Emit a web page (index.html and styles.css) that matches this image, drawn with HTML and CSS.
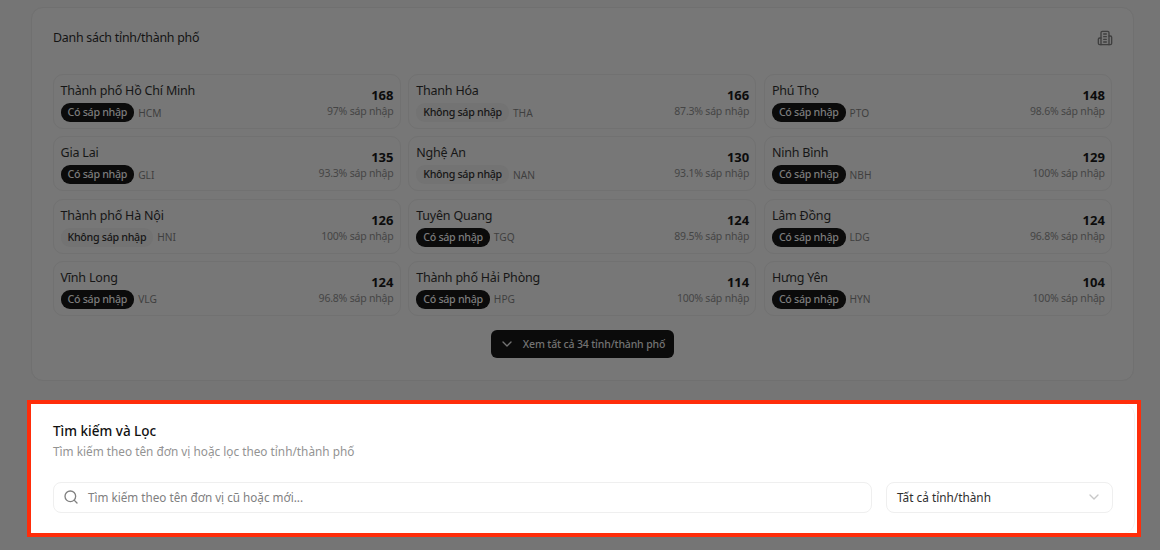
FILE: index.html
```html
<!DOCTYPE html>
<html lang="vi">
<head>
    <meta charset="UTF-8">
    <title>Danh sách tỉnh/thành phố</title>
    <link rel="stylesheet" href="styles.css">
</head>
<body>
<div class="page">
    <section class="card provinces">
        <div class="card-head">
            <h2>Danh sách tỉnh/thành phố</h2>
            <svg class="head-icon" width="16" height="16" viewBox="0 0 24 24" fill="none" stroke="currentColor" stroke-width="2" stroke-linecap="round" stroke-linejoin="round">
                <path d="M6 22V4a2 2 0 0 1 2-2h8a2 2 0 0 1 2 2v18Z"/>
                <path d="M6 12H4a2 2 0 0 0-2 2v6a2 2 0 0 0 2 2h2"/>
                <path d="M18 9h2a2 2 0 0 1 2 2v9a2 2 0 0 1-2 2h-2"/>
                <path d="M10 6h4M10 10h4M10 14h4M10 18h4"/>
            </svg>
        </div>
        <div class="grid">
            <div class="item">
                <div class="item-left"><div class="name">Thành phố Hồ Chí Minh</div><div class="meta"><span class="badge">Có sáp nhập</span><span class="code">HCM</span></div></div>
                <div class="item-right"><div class="count">168</div><div class="pct">97% sáp nhập</div></div>
            </div>
            <div class="item">
                <div class="item-left"><div class="name">Thanh Hóa</div><div class="meta"><span class="badge light">Không sáp nhập</span><span class="code">THA</span></div></div>
                <div class="item-right"><div class="count">166</div><div class="pct">87.3% sáp nhập</div></div>
            </div>
            <div class="item">
                <div class="item-left"><div class="name">Phú Thọ</div><div class="meta"><span class="badge">Có sáp nhập</span><span class="code">PTO</span></div></div>
                <div class="item-right"><div class="count">148</div><div class="pct">98.6% sáp nhập</div></div>
            </div>
            <div class="item">
                <div class="item-left"><div class="name">Gia Lai</div><div class="meta"><span class="badge">Có sáp nhập</span><span class="code">GLI</span></div></div>
                <div class="item-right"><div class="count">135</div><div class="pct">93.3% sáp nhập</div></div>
            </div>
            <div class="item">
                <div class="item-left"><div class="name">Nghệ An</div><div class="meta"><span class="badge light">Không sáp nhập</span><span class="code">NAN</span></div></div>
                <div class="item-right"><div class="count">130</div><div class="pct">93.1% sáp nhập</div></div>
            </div>
            <div class="item">
                <div class="item-left"><div class="name">Ninh Bình</div><div class="meta"><span class="badge">Có sáp nhập</span><span class="code">NBH</span></div></div>
                <div class="item-right"><div class="count">129</div><div class="pct">100% sáp nhập</div></div>
            </div>
            <div class="item">
                <div class="item-left"><div class="name">Thành phố Hà Nội</div><div class="meta"><span class="badge light">Không sáp nhập</span><span class="code">HNI</span></div></div>
                <div class="item-right"><div class="count">126</div><div class="pct">100% sáp nhập</div></div>
            </div>
            <div class="item">
                <div class="item-left"><div class="name">Tuyên Quang</div><div class="meta"><span class="badge">Có sáp nhập</span><span class="code">TGQ</span></div></div>
                <div class="item-right"><div class="count">124</div><div class="pct">89.5% sáp nhập</div></div>
            </div>
            <div class="item">
                <div class="item-left"><div class="name">Lâm Đồng</div><div class="meta"><span class="badge">Có sáp nhập</span><span class="code">LDG</span></div></div>
                <div class="item-right"><div class="count">124</div><div class="pct">96.8% sáp nhập</div></div>
            </div>
            <div class="item">
                <div class="item-left"><div class="name">Vĩnh Long</div><div class="meta"><span class="badge">Có sáp nhập</span><span class="code">VLG</span></div></div>
                <div class="item-right"><div class="count">124</div><div class="pct">96.8% sáp nhập</div></div>
            </div>
            <div class="item">
                <div class="item-left"><div class="name">Thành phố Hải Phòng</div><div class="meta"><span class="badge">Có sáp nhập</span><span class="code">HPG</span></div></div>
                <div class="item-right"><div class="count">114</div><div class="pct">100% sáp nhập</div></div>
            </div>
            <div class="item">
                <div class="item-left"><div class="name">Hưng Yên</div><div class="meta"><span class="badge">Có sáp nhập</span><span class="code">HYN</span></div></div>
                <div class="item-right"><div class="count">104</div><div class="pct">100% sáp nhập</div></div>
            </div>
        </div>
        <div class="more">
            <button class="more-btn" type="button">
                <svg width="16" height="16" viewBox="0 0 24 24" fill="none" stroke="currentColor" stroke-width="2" stroke-linecap="round" stroke-linejoin="round"><path d="m6 9 6 6 6-6"/></svg>
                <span>Xem tất cả 34 tỉnh/thành phố</span>
            </button>
        </div>
    </section>

    <div class="highlight">
        <section class="search-card">
            <h2 class="search-title">Tìm kiếm và Lọc</h2>
            <p class="search-sub">Tìm kiếm theo tên đơn vị hoặc lọc theo tỉnh/thành phố</p>
            <div class="filters">
                <div class="field search">
                    <svg width="16" height="16" viewBox="0 0 24 24" fill="none" stroke="currentColor" stroke-width="2" stroke-linecap="round" stroke-linejoin="round"><circle cx="11" cy="11" r="8"/><path d="m21 21-4.3-4.3"/></svg>
                    <span>Tìm kiếm theo tên đơn vị cũ hoặc mới...</span>
                </div>
                <div class="field select">
                    <span>Tất cả tỉnh/thành</span>
                    <svg width="16" height="16" viewBox="0 0 24 24" fill="none" stroke="currentColor" stroke-width="2" stroke-linecap="round" stroke-linejoin="round"><path d="m6 9 6 6 6-6"/></svg>
                </div>
            </div>
        </section>
    </div>
</div>
</body>
</html>
```

FILE: styles.css
```css
* {
    box-sizing: border-box;
}
html, body {
    margin: 0;
    height: 550px;
    overflow: hidden;
}
body {
    background-color: #757575;
    font-family: "Noto Sans", "Open Sans", sans-serif;
    font-size: 12px;
    color: #0e0e0e;
}
.page {
    padding: 7px 26px 0 31px;
}
h2 {
    margin: 0;
    font-size: 12.4px;
    font-weight: 400;
    line-height: 20px;
    letter-spacing: -0.25px;
}

.card {
    background-color: #777777;
    border: 1px solid #707070;
    border-radius: 12px;
}
.provinces {
    height: 373.5px;
    padding: 20px 21px 0 21px;
}
.card-head {
    display: flex;
    justify-content: space-between;
    align-items: center;
    height: 20px;
    color: #141414;
}
.head-icon {
    color: #3f3f3f;
    margin-right: -1px;
}

.grid {
    display: grid;
    grid-template-columns: repeat(3, 348px);
    column-gap: 7.7px;
    row-gap: 7.3px;
    margin: 26px 0 0 -0.5px;
}
.item {
    display: flex;
    justify-content: space-between;
    height: 55px;
    padding: 7px 6px 0 7px;
    border: 1px solid #717171;
    border-radius: 10px;
}
.name {
    font-size: 12.5px;
    line-height: 18px;
    letter-spacing: -0.2px;
    color: #161616;
}
.meta {
    display: flex;
    align-items: center;
    gap: 4px;
    margin-top: 3px;
}
.badge {
    height: 19px;
    padding: 0 7px;
    border-radius: 9px;
    background-color: #0b0b0b;
    color: #7c7c7c;
    font-size: 10.7px;
    font-weight: 500;
    line-height: 19px;
    letter-spacing: -0.3px;
}
.badge.light {
    background-color: #737373;
    color: #161616;
}
.code {
    font-size: 10.2px;
    color: #3f3f3f;
}
.item-right {
    text-align: right;
    padding-top: 5px;
}
.count {
    font-size: 13px;
    font-weight: 700;
    line-height: 17px;
    color: #0c0c0c;
}
.pct {
    font-size: 10.5px;
    line-height: 14px;
    letter-spacing: -0.2px;
    color: #454545;
}

.more {
    display: flex;
    justify-content: center;
    margin-top: 14px;
}
.more-btn {
    display: flex;
    align-items: center;
    gap: 8px;
    height: 28px;
    padding: 0 9px 0 8px;
    border: 0;
    border-radius: 6px;
    background-color: #0b0b0b;
    color: #737373;
    font-family: inherit;
    font-size: 10.5px;
    font-weight: 500;
    letter-spacing: -0.15px;
}
.more-btn span {
    padding-top: 1px;
}

/* red frame round the search card */
.highlight {
    width: 1114px;
    height: 137px;
    margin: 19.5px 0 0 -4px;
    border: 4px solid #ff2d0a;
    background-color: #ffffff;
}
.search-card {
    height: 100%;
    margin-right: 2px;
    padding: 17px 21px 0 22px;
    border-right: 1px solid #f3f3f3;
    border-top-right-radius: 12px;
    border-bottom-right-radius: 12px;
}
.search-title {
    font-size: 13.5px;
    font-weight: 500;
    letter-spacing: 0;
    color: #111111;
}
.search-sub {
    margin: 1px 0 0 0;
    font-size: 11.8px;
    line-height: 18px;
    color: #939393;
}
.filters {
    display: flex;
    gap: 14px;
    margin-top: 21.5px;
}
.field {
    display: flex;
    align-items: center;
    height: 31px;
    border: 1px solid #efefef;
    border-radius: 8px;
}
.search {
    flex: 1;
    gap: 9px;
    padding: 0 9px;
    color: #808080;
    font-size: 11.7px;
}
.select {
    width: 227px;
    justify-content: space-between;
    padding: 0 10px;
    color: #2e2e2e;
    font-size: 11.8px;
}
.select svg {
    color: #c8c8c8;
}
```
